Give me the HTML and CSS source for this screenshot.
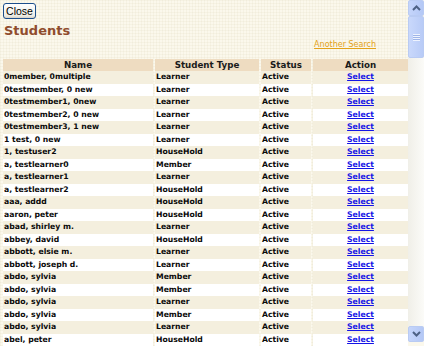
FILE: index.html
```html
<!DOCTYPE html>
<html>
<head>
<meta charset="utf-8">
<link rel="stylesheet" href="styles.css">
</head>
<body>
<div class="window">
  <div class="main">
    <button class="close">Close</button>
    <h1 class="title">Students</h1>
    <div class="search-row"><a class="search-link" href="#">Another Search</a></div>
    <table class="grid">
      <colgroup>
        <col class="c-name"><col class="c-type"><col class="c-status"><col class="c-action">
      </colgroup>
      <thead>
        <tr><th>Name</th><th>Student Type</th><th>Status</th><th>Action</th></tr>
      </thead>
      <tbody>
        <tr><td>0member, 0multiple</td><td>Learner</td><td>Active</td><td class="act"><a href="#">Select</a></td></tr>
        <tr><td>0testmember, 0 new</td><td>Learner</td><td>Active</td><td class="act"><a href="#">Select</a></td></tr>
        <tr><td>0testmember1, 0new</td><td>Learner</td><td>Active</td><td class="act"><a href="#">Select</a></td></tr>
        <tr><td>0testmember2, 0 new</td><td>Learner</td><td>Active</td><td class="act"><a href="#">Select</a></td></tr>
        <tr><td>0testmember3, 1 new</td><td>Learner</td><td>Active</td><td class="act"><a href="#">Select</a></td></tr>
        <tr><td>1 test, 0 new</td><td>Learner</td><td>Active</td><td class="act"><a href="#">Select</a></td></tr>
        <tr><td>1, testuser2</td><td>HouseHold</td><td>Active</td><td class="act"><a href="#">Select</a></td></tr>
        <tr><td>a, testlearner0</td><td>Member</td><td>Active</td><td class="act"><a href="#">Select</a></td></tr>
        <tr><td>a, testlearner1</td><td>Learner</td><td>Active</td><td class="act"><a href="#">Select</a></td></tr>
        <tr><td>a, testlearner2</td><td>HouseHold</td><td>Active</td><td class="act"><a href="#">Select</a></td></tr>
        <tr><td>aaa, addd</td><td>HouseHold</td><td>Active</td><td class="act"><a href="#">Select</a></td></tr>
        <tr><td>aaron, peter</td><td>HouseHold</td><td>Active</td><td class="act"><a href="#">Select</a></td></tr>
        <tr><td>abad, shirley m.</td><td>Learner</td><td>Active</td><td class="act"><a href="#">Select</a></td></tr>
        <tr><td>abbey, david</td><td>HouseHold</td><td>Active</td><td class="act"><a href="#">Select</a></td></tr>
        <tr><td>abbott, elsie m.</td><td>Learner</td><td>Active</td><td class="act"><a href="#">Select</a></td></tr>
        <tr><td>abbott, joseph d.</td><td>Learner</td><td>Active</td><td class="act"><a href="#">Select</a></td></tr>
        <tr><td>abdo, sylvia</td><td>Member</td><td>Active</td><td class="act"><a href="#">Select</a></td></tr>
        <tr><td>abdo, sylvia</td><td>Member</td><td>Active</td><td class="act"><a href="#">Select</a></td></tr>
        <tr><td>abdo, sylvia</td><td>Learner</td><td>Active</td><td class="act"><a href="#">Select</a></td></tr>
        <tr><td>abdo, sylvia</td><td>Member</td><td>Active</td><td class="act"><a href="#">Select</a></td></tr>
        <tr><td>abdo, sylvia</td><td>Learner</td><td>Active</td><td class="act"><a href="#">Select</a></td></tr>
        <tr><td>abel, peter</td><td>HouseHold</td><td>Active</td><td class="act"><a href="#">Select</a></td></tr>
      </tbody>
    </table>
  </div>
  <div class="scrollbar">
    <div class="sb-btn">
      <svg width="9" height="6" viewBox="0 0 9 6"><path d="M1 5 L4.5 1.5 L8 5" fill="none" stroke="#4d6185" stroke-width="2"/></svg>
    </div>
    <div class="sb-thumb"><span class="grip"></span></div>
    <div class="sb-track"></div>
    <div class="sb-btn">
      <svg width="9" height="6" viewBox="0 0 9 6"><path d="M1 1 L4.5 4.5 L8 1" fill="none" stroke="#4d6185" stroke-width="2"/></svg>
    </div>
    <div class="sb-foot"></div>
  </div>
</div>
</body>
</html>
```

FILE: styles.css
```css
html, body {
  margin: 0;
  padding: 0;
}
body {
  background: #fbf8ec;
  font-family: "DejaVu Sans", Verdana, sans-serif;
}
.window {
  display: flex;
  width: 424px;
  height: 346px;
  overflow: hidden;
}
.main {
  width: 408px;
  flex: none;
  overflow: hidden;
  padding: 3px 0 0 1px;
  box-sizing: border-box;
  background-color: #fbf8ec;
  background-image:
    repeating-linear-gradient(90deg, rgba(200,190,150,0.10) 0 1px, transparent 1px 3px),
    repeating-linear-gradient(0deg, rgba(200,190,150,0.10) 0 1px, transparent 1px 3px);
}
.close {
  display: block;
  margin: 0 0 0 2px;
  width: 33px;
  height: 16px;
  padding: 0;
  border: 1px solid #1c4e8c;
  border-radius: 3px;
  background: linear-gradient(#ffffff, #ecebe4 85%, #d6d0c5);
  font-family: "Liberation Sans", Arial, sans-serif;
  font-size: 10.5px;
  line-height: 14px;
  color: #000;
}
.title {
  margin: 4px 0 0 3px;
  font-size: 13px;
  line-height: 16px;
  font-weight: bold;
  color: #8f4c2d;
}
.search-row {
  display: flex;
  justify-content: flex-end;
  margin-top: 1px;
  padding-right: 32px;
  height: 10px;
}
.search-link {
  font-size: 8px;
  line-height: 10px;
  color: #e3a21a;
  text-decoration: underline;
}
.grid {
  margin-top: 9px;
  width: 409px;
  table-layout: fixed;
  border-collapse: separate;
  border-spacing: 2px 0;
}
.c-name { width: 150px; }
.c-type { width: 104px; }
.c-status { width: 50px; }
.c-action { width: 95px; }
.grid th {
  height: 12px;
  padding: 0;
  background: #eedcc1;
  font-size: 8.7px;
  line-height: 12px;
  font-weight: bold;
  color: #1a1a1a;
  text-align: center;
}
.grid td {
  height: 12.5px;
  padding: 0 0 0 1px;
  font-size: 7.7px;
  line-height: 10px;
  font-weight: bold;
  color: #0a0a0a;
  white-space: nowrap;
  overflow: hidden;
  vertical-align: middle;
}
.grid tbody tr:nth-child(odd) td {
  background: #f4efde;
}
.grid tbody tr:nth-child(even) td {
  background: #ffffff;
}
.grid td.act {
  text-align: center;
  padding: 0;
}
.grid td.act a {
  color: #1414e6;
  text-decoration: underline;
}
.scrollbar {
  width: 16px;
  flex: none;
  display: flex;
  flex-direction: column;
  background: #f3f2ec;
}
.sb-btn {
  height: 16px;
  flex: none;
  box-sizing: border-box;
  border: 1px solid #b9cbf3;
  border-radius: 2px;
  background: linear-gradient(90deg, #c5d5fb, #b4c8f6);
  display: flex;
  align-items: center;
  justify-content: center;
}
.sb-thumb {
  height: 42px;
  flex: none;
  box-sizing: border-box;
  border: 1px solid #b9cbf3;
  border-radius: 2px;
  background: linear-gradient(90deg, #c9d8fb, #b8cbf7);
  display: flex;
  align-items: center;
  justify-content: center;
}
.grip {
  width: 7px;
  height: 7px;
  background: repeating-linear-gradient(0deg, #eef3fe 0 1px, #9fb5e8 1px 2px);
}
.sb-track {
  flex: 1;
  background: linear-gradient(90deg, #f0efe8, #fbfbf8);
}
.sb-foot {
  height: 4px;
  flex: none;
  background: #fbf8ec;
}
```
